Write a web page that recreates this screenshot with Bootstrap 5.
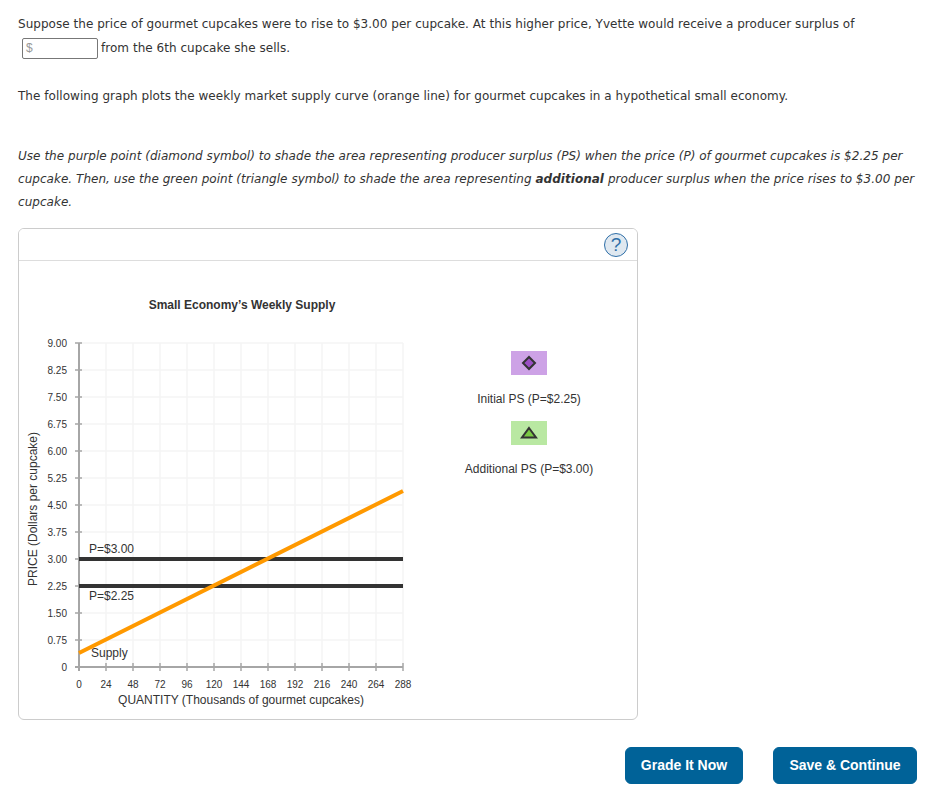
<!DOCTYPE html>
<html lang="en">
<head>
    <meta charset="UTF-8">
    <title>Producer Surplus</title>
    <link href="https://cdn.jsdelivr.net/npm/bootstrap@5.3.0/dist/css/bootstrap.min.css" rel="stylesheet">
    <style>
        body { font-family: "DejaVu Sans", Verdana, sans-serif; font-size: 12px; letter-spacing: .036px; color: #333; line-height: 23px; }
        .page-wrap { padding: 13px 13px 0 18px; }
        .question-text { margin-bottom: 0; }
        .answer-line { margin-top: 1px; height: 23px; }
        .gap-one { margin-top: 25px; }
        .gap-two { margin-top: 37px; }
        .money-box { width: 76px; height: 21px; margin: 0 3px 0 4px; padding-left: 3px; border: 1px solid #777; border-radius: 2px; color: #999; font-family: "Liberation Sans", sans-serif; line-height: 19px; }
        .graph-card { width: 620px; height: 492px; margin-top: 14px; border-color: #ccc; }
        .graph-head { height: 32px; padding: 0; background: #fff; border-color: #ddd; }
        .help-dot { width: 24px; height: 24px; margin: 4px 9px 0 0; border: 1.5px solid #2f6fa8; border-radius: 50%; background: #dfe8f0; color: #2f6fa8; font: 19px/21px "Liberation Sans", sans-serif; text-align: center; }
        .graph-svg { display: block; }
        .graph-svg text { font-family: "Liberation Sans", sans-serif; fill: #333; letter-spacing: 0; }
        .tick-y, .tick-x { font-size: 10px; }
        .tick-y { text-anchor: end; }
        .tick-x { text-anchor: middle; }
        .lab { font-size: 12px; }
        .grade-btn { width: 118px; height: 37px; padding: 0 0 2px; background: #006298; border-color: #006298; font: bold 14px "Liberation Sans", sans-serif; color: #fff; }
        .save-btn { width: 144px; }
        .btn-row { margin-top: 27px; gap: 30px; }
    </style>
</head>
<body>
<div class="page-wrap">
    <p class="question-text">Suppose the price of gourmet cupcakes were to rise to $3.00 per cupcake. At this higher price, Yvette would receive a producer surplus of</p>
    <div class="d-flex align-items-center answer-line">
        <span class="money-box">$</span><span>from the 6th cupcake she sells.</span>
    </div>
    <p class="question-text gap-one">The following graph plots the weekly market supply curve (orange line) for gourmet cupcakes in a hypothetical small economy.</p>
    <p class="question-text gap-two fst-italic">Use the purple point (diamond symbol) to shade the area representing producer surplus (PS) when the price (P) of gourmet cupcakes is $2.25 per cupcake. Then, use the green point (triangle symbol) to shade the area representing <b>additional</b> producer surplus when the price rises to $3.00 per cupcake.</p>

    <div class="card graph-card">
        <div class="card-header graph-head d-flex justify-content-end">
            <div class="help-dot">?</div>
        </div>
        <svg id="graph" class="graph-svg" width="618" height="458" viewBox="19 261 618 458" xmlns="http://www.w3.org/2000/svg"></svg>
    </div>

    <div class="d-flex justify-content-end btn-row">
        <button class="btn btn-primary grade-btn">Grade It Now</button>
        <button class="btn btn-primary grade-btn save-btn">Save &amp; Continue</button>
    </div>
</div>

<script>
    const x0 = 79, y0 = 667, step = 27;
    let out = '<text x="242" y="309" text-anchor="middle" font-size="12" font-weight="bold">Small Economy\u2019s Weekly Supply</text>';
    for (let i = 1; i <= 12; i++) {
        out += `<line x1="${x0 + i * step}" y1="343" x2="${x0 + i * step}" y2="${y0}" stroke="#f4f4f4" stroke-width="1.5"/>`;
        out += `<line x1="${x0}" y1="${y0 - i * step}" x2="403" y2="${y0 - i * step}" stroke="#f4f4f4" stroke-width="1.5"/>`;
    }
    out += `<line x1="${x0}" y1="343" x2="${x0}" y2="${y0 + 4}" stroke="#a6a6a6" stroke-width="2"/>`;
    out += `<line x1="${x0 - 4}" y1="${y0}" x2="403" y2="${y0}" stroke="#a6a6a6" stroke-width="2"/>`;
    for (let i = 0; i <= 12; i++) {
        const y = y0 - i * step, x = x0 + i * step;
        out += `<line x1="${x0 - 4}" y1="${y}" x2="${x0 + 3}" y2="${y}" stroke="#a6a6a6" stroke-width="1.5"/>`;
        out += `<line x1="${x}" y1="${y0 - 4}" x2="${x}" y2="${y0 + 4}" stroke="#a6a6a6" stroke-width="1.5"/>`;
        out += `<text class="tick-y" x="67" y="${y + 4}">${i ? (i * 0.75).toFixed(2) : '0'}</text>`;
        out += `<text class="tick-x" x="${x}" y="688">${i * 24}</text>`;
    }
    out += '<line x1="79" y1="559" x2="403" y2="559" stroke="#333" stroke-width="4"/>';
    out += '<line x1="79" y1="586" x2="403" y2="586" stroke="#333" stroke-width="4"/>';
    out += '<line x1="79" y1="653" x2="403" y2="491" stroke="#ff9900" stroke-width="4"/>';
    out += '<text class="lab" x="89" y="553">P=$3.00</text><text class="lab" x="89" y="600">P=$2.25</text><text class="lab" x="91" y="657">Supply</text>';
    out += '<text class="lab" x="241" y="704" text-anchor="middle">QUANTITY (Thousands of gourmet cupcakes)</text>';
    out += '<text class="lab" transform="translate(37 509) rotate(-90)" text-anchor="middle">PRICE (Dollars per cupcake)</text>';
    out += '<rect x="511" y="351" width="36" height="24" fill="#cda2e6"/><polygon points="529,357 535,363 529,369 523,363" fill="#9b4fc4" stroke="#333" stroke-width="2"/>';
    out += '<text class="lab" x="529" y="403" text-anchor="middle">Initial PS (P=$2.25)</text>';
    out += '<rect x="511" y="421" width="36" height="24" fill="#b9e8a2"/><polygon points="529,428 536,437.500 522,437.500" fill="#7ac943" stroke="#333" stroke-width="2"/>';
    out += '<text class="lab" x="529" y="473" text-anchor="middle">Additional PS (P=$3.00)</text>';
    document.getElementById("graph").innerHTML = out;
</script>
<script src="https://cdn.jsdelivr.net/npm/bootstrap@5.3.0/dist/js/bootstrap.bundle.min.js"></script>
</body>
</html>
